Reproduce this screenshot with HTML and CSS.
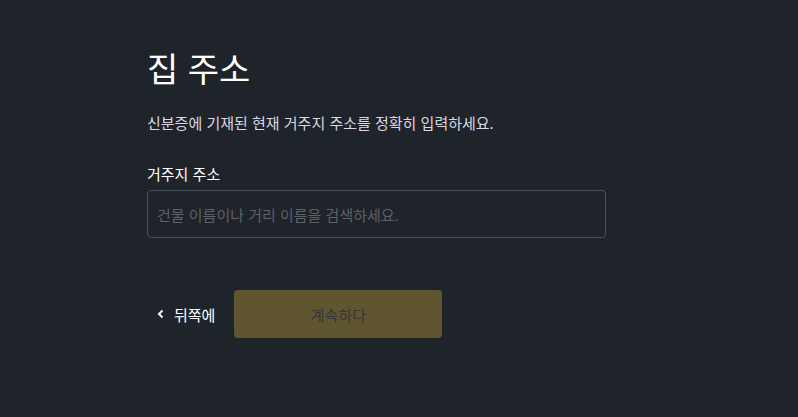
FILE: index.html
```html
<!DOCTYPE html>
<html lang="ko">
<head>
    <meta charset="UTF-8">
    <meta name="viewport" content="width=device-width, initial-scale=1.0">
    <title>집 주소</title>
    <link rel="stylesheet" href="styles.css">
</head>
<body>
    <main class="page">
        <h1 class="title">집 주소</h1>
        <p class="subtitle">신분증에 기재된 현재 거주지 주소를 정확히 입력하세요.</p>

        <label class="field-label" for="address">거주지 주소</label>
        <input class="field-input" type="text" id="address" placeholder="건물 이름이나 거리 이름을 검색하세요.">

        <div class="actions">
            <button type="button" class="back-btn">
                <svg class="chevron" width="8" height="10" viewBox="0 0 8 10">
                    <path d="M5.5 1.5 L2 5 L5.5 8.5" fill="none" stroke="#fff" stroke-width="2"/>
                </svg>
                뒤쪽에
            </button>
            <button type="button" class="next-btn" disabled>계속하다</button>
        </div>
    </main>
</body>
</html>
```

FILE: styles.css
```css
body {
    margin: 0;
    padding: 0;
    background-color: #1f232a;
    font-family: "Noto Sans CJK KR", "Noto Sans", sans-serif;
    color: #fff;
    height: 100vh;
}

.page {
    width: 459px;
    margin-left: 147px;
    padding-top: 44px;
    display: flex;
    flex-direction: column;
}

.title {
    margin: 0;
    font-size: 34px;
    font-weight: 400;
    line-height: 48px;
    color: #fff;
}

.subtitle {
    margin: 20px 0 0 0;
    font-size: 15px;
    line-height: 22px;
    color: #d7dae0;
}

.field-label {
    margin-top: 29px;
    font-size: 15px;
    line-height: 22px;
    font-weight: 400;
    color: #fff;
}

.field-input {
    margin-top: 5px;
    height: 48px;
    box-sizing: border-box;
    padding: 0 9px;
    background-color: transparent;
    border: 1px solid #4b5059;
    border-radius: 4px;
    font-family: inherit;
    font-size: 15px;
    color: #fff;
}

.field-input::placeholder {
    color: #5c6168;
}

.actions {
    margin-top: 52px;
    display: flex;
    align-items: center;
    gap: 19px;
}

.back-btn {
    display: flex;
    align-items: center;
    gap: 9px;
    padding: 0 0 0 10px;
    background: none;
    border: none;
    color: #fff;
    font-family: inherit;
    font-size: 15px;
    font-weight: 400;
    cursor: pointer;
}

.next-btn {
    width: 208px;
    height: 48px;
    background-color: #5f5530;
    border: none;
    border-radius: 4px;
    color: #34353a;
    font-family: inherit;
    font-size: 15px;
}
```
